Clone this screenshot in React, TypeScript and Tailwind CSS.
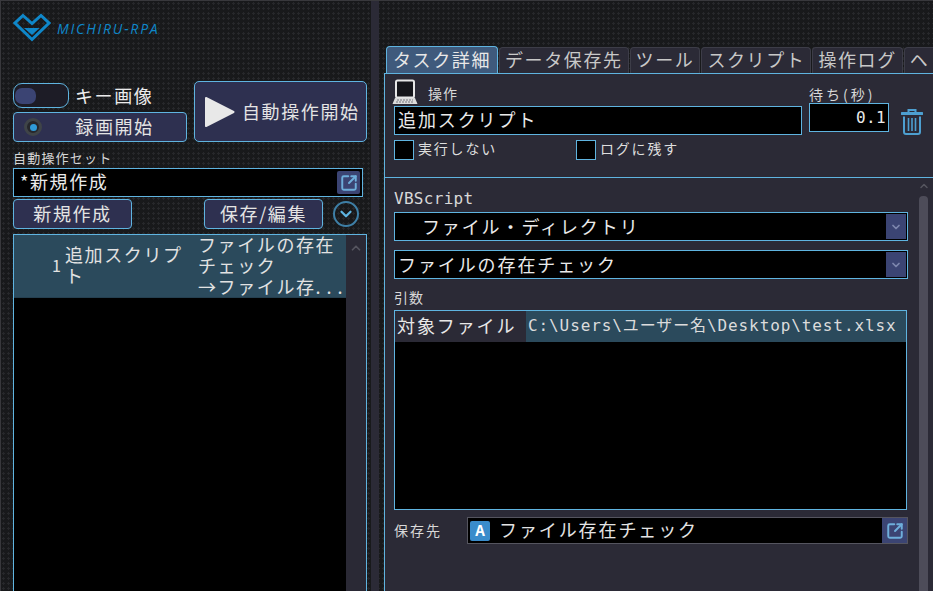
import { ChevronDown, ChevronUp, SquareArrowOutUpRight } from "lucide-react";

const jp = "font-['Noto_Sans_CJK_JP','Noto_Sans',sans-serif]";
const mono = "font-['DejaVu_Sans_Mono','Noto_Sans_CJK_JP',monospace]";

// repeating dots of the window background
const dots = "bg-[#18191b] bg-[radial-gradient(#27282b_1.2px,transparent_1.2px)] bg-[length:5px_5px]";

function Logo() {
  return (
    <div className="flex items-center gap-[6px]">
      <svg width="38" height="30" viewBox="0 0 38 30" fill="none">
        <path d="M10 2.5 L19 10.5 L28 2.5 L36 10 L19 26.5 L2 10 Z" stroke="#0f87c9" strokeWidth="3" />
        <path d="M11 15 H26.5 L19 22 Z" fill="#0f87c9" />
      </svg>
      <span className="font-['Open_Sans',sans-serif] text-[14px] italic tracking-[1.8px] text-[#0f87c9]">MICHIRU-RPA</span>
    </div>
  );
}

function OpenButton({ className }: { className: string }) {
  return (
    <div className={`flex items-center justify-center bg-[#3b4473] ${className}`}>
      <SquareArrowOutUpRight size={18} strokeWidth={2.6} className="text-[#6eaedb]" />
    </div>
  );
}

function Btn({ label, className }: { label: string; className: string }) {
  return (
    <div className={`flex items-center justify-center rounded-[4px] border border-[#5fb4e0] bg-[#2e3050] pb-[1px] text-[18px] tracking-[1.6px] text-[#e4e4e4] ${className}`}>
      {label}
    </div>
  );
}

function LeftPane() {
  return (
    <div className="flex w-[371px] shrink-0 flex-col pl-[13px] pt-[13px]">
      <Logo />
      <div className="mt-[38px] flex w-[354px] gap-[7px]">
        <div className="flex w-[174px] flex-col gap-[4px]">
          <div className="mt-[2px] flex items-center gap-[6px]">
            <div className="flex h-[25px] w-[56px] items-center rounded-[9px] border border-[#5fb4e0] bg-[#1d1c26] pl-[1px]">
              <div className="h-[16px] w-[21px] rounded-[7px] bg-[#3b4473]" />
            </div>
            <span className="text-[18px] leading-[25px] tracking-[1.6px] text-[#ececec]">キー画像</span>
          </div>
          <div className="relative flex h-[30px] items-center justify-center rounded-[4px] border border-[#5fb4e0] bg-[#2e3050] pb-[1px] pl-[29px] text-[18px] tracking-[1.6px] text-[#e4e4e4]">
            <div className="absolute left-[10px] top-[5px] flex size-[18px] items-center justify-center rounded-full border-[3px] border-[#3f4448] bg-[#26272b]">
              <div className="size-[7px] rounded-full bg-[#2f9bd8]" />
            </div>
            録画開始
          </div>
        </div>
        <div className="flex h-[61px] w-[173px] items-center gap-[7px] rounded-[5px] border border-[#5fb4e0] bg-[#2e3050] pl-[9px] text-[18px] tracking-[1.6px] text-[#e4e4e4]">
          <svg width="31" height="32" viewBox="0 0 31 32" className="shrink-0">
            <path d="M2 2 L29.5 16 L2 30 Z" fill="#e8e8e8" stroke="#e8e8e8" strokeWidth="2" strokeLinejoin="round" />
          </svg>
          <span className="whitespace-nowrap">自動操作開始</span>
        </div>
      </div>
      <div className="mt-[7px] h-[19px] text-[13px] leading-[18px] tracking-[1.2px] text-[#d6d6d6]">自動操作セット</div>
      <div className="flex h-[29px] w-[350px] items-center justify-between border border-[#5fb4e0] bg-black pl-[6px] pr-[2px] text-[18px] tracking-[1.6px] text-[#eaeaea]">
        <span className="pb-[2px]">*新規作成</span>
        <OpenButton className="h-[23px] w-[23px] rounded-[2px]" />
      </div>
      <div className="mt-[2px] flex h-[30px] w-[346px] items-center">
        <Btn label="新規作成" className="h-[30px] w-[119px]" />
        <Btn label="保存/編集" className="ml-[72px] h-[30px] w-[119px]" />
        <div className="ml-[10px] flex size-[26px] items-center justify-center rounded-full border-2 border-[#3e7fa6]">
          <ChevronDown size={18} strokeWidth={3} className="text-[#5fb4e0]" />
        </div>
      </div>
      <div className="mt-[5px] flex w-[354px] flex-1 border border-b-0 border-[#5fb4e0] bg-black">
        <div className="min-w-0 flex-1">
          <div className="flex h-[63px] items-center border-b border-[#253f4f] bg-[#2b4a5c] pb-[2px] text-[18px] leading-[21px] text-[#e2e2e2]">
            <div className="w-[51px] pr-[4px] text-right text-[16px]">1</div>
            <div className="w-[133px] tracking-[1.6px]">追加スクリプト</div>
            <div className="w-[148px] tracking-[1.6px]">
              <div>ファイルの存在</div>
              <div>チェック</div>
              <div className="whitespace-nowrap">
                →ファイル存<span className="tracking-[6px]">...</span>
              </div>
            </div>
          </div>
        </div>
        <div className="flex w-[20px] shrink-0 justify-center bg-[#2a2935] pt-[6px]">
          <ChevronUp size={14} strokeWidth={3} className="text-[#55555f]" />
        </div>
      </div>
    </div>
  );
}

const tabs = ["データ保存先", "ツール", "スクリプト", "操作ログ"];

function Tabs() {
  return (
    <div className="mt-[46px] flex h-[27px] items-end gap-[1px] pl-[2px] text-[18px] tracking-[1.6px] text-[#c8c8c8]">
      <div className="flex h-[27px] w-[112px] shrink-0 items-center justify-center rounded-t-[4px] border border-b-0 border-[#5fb4e0] bg-[#3f5a7c] pb-[2px] text-[#e8e8e8]">タスク詳細</div>
      {tabs.map((t) => (
        <div key={t} className="flex h-[26px] shrink-0 items-center whitespace-nowrap rounded-t-[4px] border border-b-0 border-[#3d3d48] bg-[#2b2a36] px-[5px] pb-[2px]">
          {t}
        </div>
      ))}
      <div className="flex h-[26px] w-[40px] shrink-0 items-center rounded-t-[4px] border border-b-0 border-[#3d3d48] bg-[#2b2a36] pb-[2px] pl-[5px]">ヘ</div>
    </div>
  );
}

function Check({ label, className }: { label: string; className: string }) {
  return (
    <div className={`flex items-center gap-[4px] text-[14px] tracking-[1.8px] text-[#dedede] ${className}`}>
      <div className="size-[20px] border border-[#5fb4e0] bg-black" />
      <span className="pb-[2px]">{label}</span>
    </div>
  );
}

function Select({ label, className }: { label: string; className: string }) {
  return (
    <div className={`flex h-[29px] w-[514px] items-center justify-between border border-[#5fb4e0] bg-black pr-[1px] text-[18px] tracking-[1.9px] text-[#eaeaea] ${className}`}>
      <span className="pb-[1px]">{label}</span>
      <div className="flex h-[25px] w-[20px] items-center justify-center bg-[#3b4473]">
        <ChevronDown size={12} strokeWidth={3.5} className="text-[#7d86ad]" />
      </div>
    </div>
  );
}

function LaptopIcon() {
  return (
    <svg width="26" height="26" viewBox="0 0 26 26" fill="none" className="shrink-0">
      <rect x="4" y="1.5" width="18" height="17" rx="1.5" stroke="#e6e6e6" strokeWidth="2" fill="#15151a" />
      <path d="M3 19 H23 L25.5 25 H0.5 Z" fill="#dcdcdc" />
      <path d="M5 21 H21 M4 23 H22" stroke="#77777f" strokeWidth="1" strokeDasharray="2 1" />
    </svg>
  );
}

function TrashIcon() {
  return (
    <svg width="22" height="27" viewBox="0 0 22 27" fill="none" className="absolute left-[516px] top-[34px]" stroke="#4d9fd0">
      <path d="M7.5 4 V2 H14.5 V4" strokeWidth="2" />
      <path d="M1 5.5 H21" strokeWidth="3" strokeLinecap="round" />
      <path d="M3 8.5 V24 Q3 26 5 26 H17 Q19 26 19 24 V8.5" strokeWidth="2" />
      <path d="M7.5 10 V23 M11 10 V23 M14.5 10 V23" strokeWidth="1.6" />
    </svg>
  );
}

function RightPane() {
  return (
    <div className="flex min-w-0 flex-1 flex-col overflow-hidden pl-[5px]">
      <Tabs />
      <div className="flex flex-1 flex-col border-l border-t border-[#5fb4e0] bg-[#2b2a36]">
        <div className="relative h-[104px] shrink-0 border-b border-[#5fb4e0] pl-[9px]">
          <div className="flex h-[32px] items-end gap-[10px] pb-[3px] text-[14px] leading-[16px] tracking-[1px] text-[#d8d8d8]">
            <div className="-ml-[2px] mb-[-2px]">
              <LaptopIcon />
            </div>
            <span className="mb-[2px]">操作</span>
          </div>
          <div className="flex h-[29px] w-[408px] items-center border border-[#5fb4e0] bg-black pb-[2px] pl-[3px] text-[18px] tracking-[1.9px] text-[#eaeaea]">追加スクリプト</div>
          <div className="mt-[3px] flex">
            <Check label="実行しない" className="w-[182px]" />
            <Check label="ログに残す" className="" />
          </div>
          <div className="absolute left-[424px] top-[12px] w-[80px]">
            <div className="text-[14px] leading-[16px] tracking-[3px] text-[#d8d8d8]">待ち(秒)</div>
            <div className={`mt-[1px] flex h-[29px] items-center justify-end border border-[#5fb4e0] bg-black pr-[2px] text-[16px] tracking-[0.4px] text-[#eaeaea] ${mono}`}>0.1</div>
          </div>
          <TrashIcon />
        </div>
        <div className="flex min-h-0 flex-1">
          <div className="w-[529px] shrink-0 pl-[9px]">
            <div className={`mt-[11px] h-[20px] text-[16px] leading-[20px] tracking-[0.3px] text-[#d8d8d8] ${mono}`}>VBScript</div>
            <div className="mt-[3px] flex flex-col gap-[9px]">
              <Select label="　ファイル・ディレクトリ" className="pl-[7px]" />
              <Select label="ファイルの存在チェック" className="pl-[3px]" />
            </div>
            <div className="mt-[8px] h-[20px] text-[14px] leading-[20px] tracking-[1px] text-[#d8d8d8]">引数</div>
            <div className="mt-[3px] h-[200px] w-[513px] border border-[#5fb4e0] bg-black">
              <div className="flex h-[31px] items-center text-[18px] text-[#e8e8e8]">
                <div className="flex h-full w-[131px] items-center bg-[#2b2a36] pb-[2px] pl-[2px] tracking-[1.9px]">対象ファイル</div>
                <div className={`flex h-full flex-1 items-center whitespace-nowrap bg-[#2b4a5c] pb-[1px] pl-[2px] text-[16px] tracking-[0.9px] text-[#dcdcdc] ${mono}`}>C:\Users\ユーザー名\Desktop\test.xlsx</div>
              </div>
            </div>
            <div className="mt-[7px] flex items-center">
              <span className="w-[73px] text-[14px] tracking-[2px] text-[#d8d8d8]">保存先</span>
              <div className="flex h-[27px] w-[441px] items-center border border-[#55555f] bg-black pl-[2px] text-[18px] tracking-[1.9px] text-[#e4e4e4]">
                <div className="flex size-[20px] items-center justify-center rounded-[2px] bg-[#3a8ccb] text-[15px] font-bold tracking-normal text-white">A</div>
                <span className="ml-[9px] flex-1 pb-[3px]">ファイル存在チェック</span>
                <OpenButton className="h-[25px] w-[25px]" />
              </div>
            </div>
          </div>
          <div className="flex flex-1 flex-col items-center">
            <ChevronUp size={12} strokeWidth={3} className="mt-[2px] text-[#55555f]" />
            <div className="mt-[4px] w-[9px] flex-1 rounded-t-[4px] bg-[#4d4c59]" />
          </div>
        </div>
      </div>
    </div>
  );
}

export default function App() {
  return (
    <div className={`flex h-[591px] w-[933px] overflow-hidden border-l border-t border-[#38383c] ${jp} ${dots}`}>
      <div className="-ml-[1px] -mt-[1px] flex h-[591px] w-[933px] shrink-0">
        <LeftPane />
        <div className="w-[8px] shrink-0 bg-[#2b2a36]" />
        <RightPane />
      </div>
    </div>
  );
}
